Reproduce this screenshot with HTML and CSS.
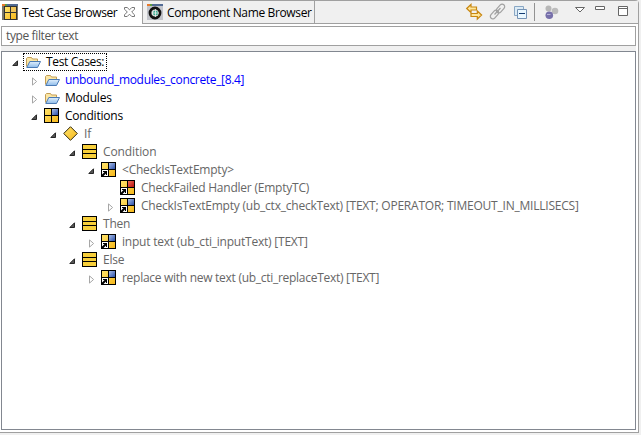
FILE: index.html
```html
<!DOCTYPE html>
<html lang="en">
<head>
<meta charset="utf-8">
<title>Test Case Browser</title>
<link rel="stylesheet" href="styles.css">
</head>
<body>
<svg class="defs" aria-hidden="true">
  <defs>
    <linearGradient id="yel" x1="0" y1="0" x2="1" y2="1"><stop offset="0" stop-color="#ffe36a"/><stop offset="1" stop-color="#f6b81c"/></linearGradient>
    <linearGradient id="blu" x1="0" y1="0" x2="1" y2="1"><stop offset="0" stop-color="#a9bfe8"/><stop offset="1" stop-color="#2c4fa8"/></linearGradient>
    <linearGradient id="red" x1="0" y1="0" x2="1" y2="1"><stop offset="0" stop-color="#f0705a"/><stop offset="1" stop-color="#b80e0e"/></linearGradient>
    <linearGradient id="fold" x1="0" y1="0" x2="0" y2="1"><stop offset="0" stop-color="#e2f0fc"/><stop offset="1" stop-color="#8dbbea"/></linearGradient>
    <symbol id="folder" viewBox="0 0 16 16"><path d="M1.500 12.500v-8l1-1h4l1 1.500h5v2.500" fill="#fbe6a4" stroke="#c39d55"/><path d="M1.800 13.500l3-6h10.700l-3 6z" fill="url(#fold)" stroke="#4a7ab5"/></symbol>
    <symbol id="suite" viewBox="0 0 15 15"><path d="M0 0h15v15H0z"/><path d="M1 1h6v6H1zM1 8h6v6H1zM8 8h6v6H8z" fill="url(#yel)"/><path d="M8 1h6v6H8z" fill="url(#blu)"/></symbol>
    <symbol id="ref" viewBox="0 0 15 15"><use href="#suite"/><path d="M0 7h8v8H0z"/><path d="M1 8h6v6H1z" fill="#fff"/><path d="M2 9h4v4H5v-1.500L2.500 14H1v-1.500L3.500 10H2z"/></symbol>
    <symbol id="handler" viewBox="0 0 15 15"><use href="#ref"/><path d="M8 1h6v6H8z" fill="url(#red)"/></symbol>
    <symbol id="rows" viewBox="0 0 15 15"><path d="M0 0h15v15H0z"/><path d="M1 1h13v4H1zM1 6h13v3H1zM1 10h13v4H1z" fill="#f7cf3b"/></symbol>
    <symbol id="diamond" viewBox="0 0 16 16"><path d="M7.500 .7L14.300 7.500 7.500 14.300 .7 7.500z" fill="url(#yel)" stroke="#30280c"/></symbol>
    <symbol id="open" viewBox="0 0 7 7"><path d="M5.500 .8v4.700H.8z" fill="#555" stroke="#262626"/></symbol>
    <symbol id="closed" viewBox="0 0 7 9"><path d="M1.500 .9L5.600 4.500 1.500 8.100z" fill="#fff" stroke="#a6a6a6"/></symbol>
  </defs>
</svg>
<main class="view">
  <header class="tabs">
    <div class="tab active">
      <svg class="tab-icon" viewBox="0 0 16 16"><path d="M0 0h16v2H0z" fill="#526b94"/><path d="M0 0h3v2H0z" fill="#e8792b"/><path d="M3 0h2v2H3z" fill="#5a9b3f"/><path d="M0 2h16v14H0z" fill="#77756c"/><path d="M2 2h13v14H2z" fill="#33332f"/><path d="M3 3h5v5H3zM3 9h5v6H3zM9 9h5v6H9z" fill="url(#yel)"/><path d="M9 3h5v5H9z" fill="#efc45a"/></svg>
      <span class="t1">Test Case Browser</span>
      <svg class="close" viewBox="0 0 11 10"><path d="M.5 .5h2.700l2.300 2.300L7.800.5h2.700v1.700L7.700 5l2.800 2.800v1.700H7.800L5.500 7.200 3.200 9.500H.5V7.800L3.300 5 .5 2.200z" fill="#fff" stroke="#777"/></svg>
    </div>
    <div class="tab second">
      <svg class="tab-icon" viewBox="0 0 16 16"><path d="M0 0h16v16H0z" fill="#c3c5cb"/><path d="M0 0h16v2H0z" fill="#526b94"/><path d="M0 0h3v2H0z" fill="#e8792b"/><path d="M3 0h2v2H3z" fill="#5a9b3f"/><circle cx="8" cy="9" r="5" fill="#ddd" stroke="#111" stroke-width="2.800"/><circle cx="8.500" cy="9" r="2.500" fill="#3bad91"/><path d="M8.500 5v8M5 9h7" stroke="#eee" stroke-width=".8"/></svg>
      <span class="t2">Component Name Browser</span>
    </div>
    <div class="toolbar">
    <svg class="tools" viewBox="0 0 174 22">
      <g fill="#ffe69a" stroke="#c88711" stroke-width="1.200"><path d="M2.700 7.500L7 3.500V6h5.500v3H7v2.500z"/><path d="M17.600 14L13.300 10v2.500H7v3h6.300V18z"/></g>
      <g fill="none" stroke="#a2a2a2" stroke-width="1.200"><rect x="-5" y="-2.500" width="10" height="5" rx="2.500" transform="translate(36.500 7.500) rotate(-48)"/><rect x="-5" y="-2.500" width="10" height="5" rx="2.500" transform="translate(30.500 13.500) rotate(-48)"/><path d="M30.500 13.500l6-6.500"/></g>
      <path d="M50.500 14.500v-9h9v9z" fill="#dcebf5" stroke="#89a7c4"/><path d="M53.500 8.500h9v9h-9z" fill="#e9f7ff" stroke="#7593b5"/><path d="M55 12.500h6" stroke="#123b73"/>
      <path d="M70.500 2v18" stroke="#929292"/>
      <circle cx="84.500" cy="7.500" r="3" fill="#b7b7b7"/><circle cx="91" cy="10" r="3.300" fill="#bcbcbc"/><circle cx="85.300" cy="14.300" r="3.800" fill="#7770aa"/><path d="M83 13.500h3.500" stroke="#b7b3d9"/>
      <path d="M111.500 6.500h9L116 11z" fill="#fff" stroke="#666"/>
      <path d="M131.500 5.500h9v3h-9z" fill="#fff" stroke="#666"/>
      <path d="M154.500 5.500h9v9h-9zM154 7.500h10" fill="#fff" stroke="#666"/>
    </svg>
    </div>
  </header>
  <section class="content">
    <div class="filter">type filter text</div>
    <div class="tree">
      <div class="row l0"><svg class="arr"><use href="#open"/></svg><span class="sel"><svg class="ico f"><use href="#folder"/></svg><span class="a">Test Cases:</span></span></div>
      <div class="row l1"><svg class="arr c"><use href="#closed"/></svg><svg class="ico f"><use href="#folder"/></svg><span class="b blue">unbound_modules_concrete_[8.4]</span></div>
      <div class="row l1"><svg class="arr c"><use href="#closed"/></svg><svg class="ico f"><use href="#folder"/></svg><span>Modules</span></div>
      <div class="row l1"><svg class="arr"><use href="#open"/></svg><svg class="ico"><use href="#suite"/></svg><span>Conditions</span></div>
      <div class="row l2 g"><svg class="arr"><use href="#open"/></svg><svg class="ico f"><use href="#diamond"/></svg><span>If</span></div>
      <div class="row l3 g"><svg class="arr"><use href="#open"/></svg><svg class="ico"><use href="#rows"/></svg><span class="e">Condition</span></div>
      <div class="row l4 g"><svg class="arr"><use href="#open"/></svg><svg class="ico"><use href="#ref"/></svg><span>&lt;CheckIsTextEmpty&gt;</span></div>
      <div class="row l5 g"><svg class="arr"></svg><svg class="ico"><use href="#handler"/></svg><span>CheckFailed Handler (EmptyTC)</span></div>
      <div class="row l5 g"><svg class="arr c"><use href="#closed"/></svg><svg class="ico"><use href="#ref"/></svg><span>CheckIsTextEmpty (ub_ctx_checkText) [TEXT; OPERATOR; TIMEOUT_IN_MILLISECS]</span></div>
      <div class="row l3 g"><svg class="arr"><use href="#open"/></svg><svg class="ico"><use href="#rows"/></svg><span>Then</span></div>
      <div class="row l4 g"><svg class="arr c"><use href="#closed"/></svg><svg class="ico"><use href="#ref"/></svg><span>input text (ub_cti_inputText) [TEXT]</span></div>
      <div class="row l3 g"><svg class="arr"><use href="#open"/></svg><svg class="ico"><use href="#rows"/></svg><span>Else</span></div>
      <div class="row l4 g"><svg class="arr c"><use href="#closed"/></svg><svg class="ico"><use href="#ref"/></svg><span class="m">replace with new text (ub_cti_replaceText) [TEXT]</span></div>
    </div>
  </section>
</main>
</body>
</html>
```
FILE: styles.css
```css
* { box-sizing: border-box; }
body { margin: 0; width: 641px; height: 435px; overflow: hidden; background: #f0f0f0; font: 12px/18px "Open Sans", "Noto Sans", sans-serif; color: #000; white-space: nowrap; }
svg { display: block; flex: none; }
.defs { position: absolute; width: 0; height: 0; }
.view { width: 639px; height: 433px; border: 1px solid #a0a0a0; border-left: 0; border-top-right-radius: 4px; display: flex; flex-direction: column; background: #fff; }
.tabs { height: 23px; display: flex; background: #f0f0f0; flex: none; }
.tab { display: flex; align-items: flex-start; flex: none; }
.tab span { line-height: 23px; }
.active { width: 142px; background: #fff; padding-left: 2px; }
.second { width: 173px; border: 1px solid #a0a0a0; border-top: 0; padding-left: 4px; }
.tab-icon { width: 16px; height: 16px; margin: 3px 4px 0 0; }
.t1 { width: 102px; letter-spacing: -0.45px; }
.t2 { letter-spacing: -0.36px; }
.close { width: 11px; height: 10px; margin-top: 6px; }
.toolbar { flex: 1; border-bottom: 1px solid #a0a0a0; display: flex; justify-content: flex-end; }
.tools { width: 174px; height: 22px; }
.content { flex: 1; padding: 2px 2px 2px 1px; display: flex; flex-direction: column; }
.filter { height: 20px; background: #fff; border: 1px solid #a0a0a0; padding-left: 4px; color: #555; line-height: 18px; flex: none; letter-spacing: -0.38px; }
.tree { flex: 1; background: #fff; border: 1px solid #828790; padding-top: 1px; box-shadow: 0 -5px #f0f0f0; margin-top: 5px; letter-spacing: -0.22px; }
.row { height: 18px; display: flex; align-items: flex-start; }
.l0 { padding-left: 10px; }
.l1 { padding-left: 29px; }
.l2 { padding-left: 48px; }
.l3 { padding-left: 67px; }
.l4 { padding-left: 86px; }
.l5 { padding-left: 105px; }
.arr { width: 7px; height: 7px; margin: 7px 6px 0 0; }
.arr.c { height: 9px; margin-top: 6px; }
.ico { width: 15px; height: 15px; margin: 1px 6px 0 0; }
.ico.f { width: 16px; height: 16px; margin-right: 5px; }
.sel { display: flex; align-items: center; height: 18px; border: 1px dotted #000; padding: 0 2px 0 1px; margin-left: -2px; }
.sel .ico.f { margin-top: 0; }
.g { color: #666; }
.blue { color: #00f; }
.a { letter-spacing: -0.36px; }
.b { letter-spacing: -0.33px; }
.e { letter-spacing: -0.1px; }
.m { letter-spacing: -0.28px; }
```
